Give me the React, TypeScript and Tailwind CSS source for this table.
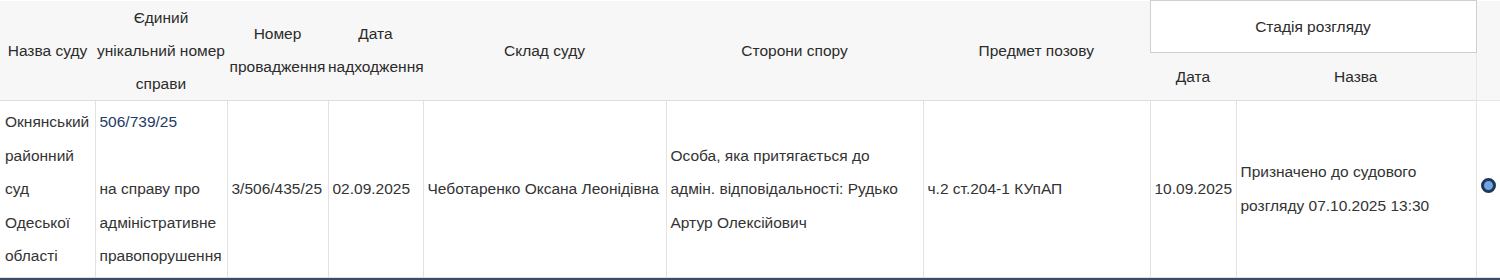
export default function App() {
  const th = "bg-[#f7f7f7] font-normal text-center align-middle leading-[33px] p-0 text-[#2b2b2b]";
  const td = "align-middle px-[4px] py-[4px] leading-[33.5px] border-l border-[#e3e3e3] text-left";
  return (
    <div className="w-[1500px] h-[280px] bg-white overflow-hidden font-['Liberation_Sans',Arial,sans-serif] text-[15.5px] text-[#333]">
      <table className="table-fixed border-collapse w-[1500px]">
        <colgroup>
          <col className="w-[95px]" />
          <col className="w-[132px]" />
          <col className="w-[101px]" />
          <col className="w-[95px]" />
          <col className="w-[243px]" />
          <col className="w-[257px]" />
          <col className="w-[227px]" />
          <col className="w-[86px]" />
          <col className="w-[240px]" />
          <col className="w-[24px]" />
        </colgroup>
        <thead>
          <tr className="h-[52px]">
            <th rowSpan={2} className={th + " border-b border-[#dedede] whitespace-nowrap"}>Назва суду</th>
            <th rowSpan={2} className={th + " border-b border-[#dedede] whitespace-nowrap"}>
              Єдиний<br />унікальний номер<br />справи
            </th>
            <th rowSpan={2} className={th + " border-b border-[#dedede] whitespace-nowrap"}>
              Номер<br />провадження
            </th>
            <th rowSpan={2} className={th + " border-b border-[#dedede] whitespace-nowrap"}>
              Дата<br />надходження
            </th>
            <th rowSpan={2} className={th + " border-b border-[#dedede]"}>Склад суду</th>
            <th rowSpan={2} className={th + " border-b border-[#dedede]"}>Сторони спору</th>
            <th rowSpan={2} className={th + " border-b border-[#dedede]"}>Предмет позову</th>
            <th colSpan={2} className="bg-white font-normal text-center align-middle p-0 border border-[#cfcfcf] text-[#2b2b2b]">
              Стадія розгляду
            </th>
            <th rowSpan={2} className={th + " border-b border-l border-[#e6e6e6]"}></th>
          </tr>
          <tr className="h-[48px]">
            <th className={th + " border-b border-[#dedede]"}>Дата</th>
            <th className={th + " border-b border-[#dedede]"}>Назва</th>
          </tr>
        </thead>
        <tbody>
          <tr className="h-[176px]">
            <td className="align-middle px-[5px] py-[4px] leading-[33.5px] text-left whitespace-nowrap">
              Окнянський<br />районний<br />суд<br />Одеської<br />області
            </td>
            <td className={td + " whitespace-nowrap"}>
              <a className="text-[#1d3a68]">506/739/25</a>
              <br />
              <br />
              на справу про<br />адміністративне<br />правопорушення
            </td>
            <td className={td + " whitespace-nowrap"}>3/506/435/25</td>
            <td className={td + " whitespace-nowrap"}>02.09.2025</td>
            <td className={td + " whitespace-nowrap"}>Чеботаренко Оксана Леонідівна</td>
            <td className={td + " whitespace-nowrap"}>
              Особа, яка притягається до<br />адмін. відповідальності: Рудько<br />Артур Олексійович
            </td>
            <td className={td}>ч.2 ст.204-1 КУпАП</td>
            <td className={td + " whitespace-nowrap"}>10.09.2025</td>
            <td className={td + " whitespace-nowrap"}>
              Призначено до судового<br />розгляду 07.10.2025 13:30
            </td>
            <td className="align-middle p-0 pb-[9px] border-l border-[#e3e3e3] text-center">
              <span className="inline-block align-middle w-[15px] h-[15px] rounded-full bg-[#6ea6e6] border-[3px] border-[#1f3857]"></span>
            </td>
          </tr>
        </tbody>
      </table>
      <div className="h-px bg-[#e0e0e0]"></div>
      <div className="h-[3px] bg-[#3d4b66]"></div>
    </div>
  );
}
